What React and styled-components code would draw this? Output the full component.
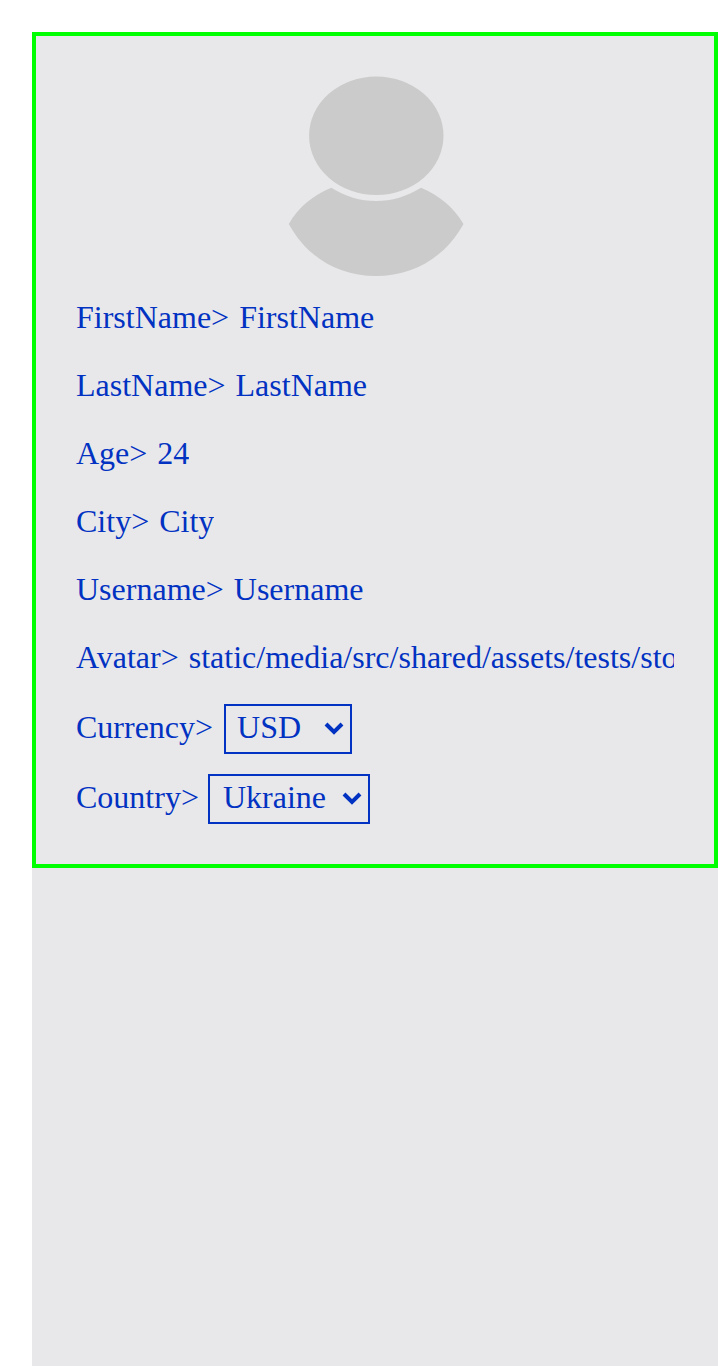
import React from "react";
import styled, { createGlobalStyle } from "styled-components";

const GlobalStyle = createGlobalStyle`
  body { margin: 0; background: #fff; overflow: hidden; }
`;

const Page = styled.main`
  box-sizing: border-box;
  margin: 32px 0 0 32px;
  height: 1334px;
  background: #e8e8ea;
  color: #0232c2;
  font: 32px/36px "Liberation Serif", "Times New Roman", serif;
`;

const Card = styled.section`
  box-sizing: border-box;
  height: 836px;
  padding: 40px;
  border: 4px solid #00ff00;
  display: flex;
  flex-direction: column;
`;

const Avatar = styled.svg`
  display: block;
  width: 200px;
  height: 200px;
  flex: none;
  align-self: center;
  margin: 0 0 23px 2px;
`;

const Field = styled.div`
  display: flex;
  flex: none;
  align-items: center;
  height: ${({ $select }) => ($select ? 50 : 36)}px;
  margin-bottom: ${({ $gap }) => $gap}px;
`;

const Label = styled.span`
  flex: none;
  margin-right: ${({ $gap = 10 }) => $gap}px;
  padding-bottom: ${({ $lift = 0 }) => $lift}px;
  white-space: nowrap;
`;

const Value = styled.span`
  flex: 0 1 auto;
  min-width: 0;
  overflow: hidden;
  white-space: nowrap;
`;

const SelectBox = styled.button`
  box-sizing: border-box;
  display: flex;
  align-items: center;
  justify-content: space-between;
  width: ${({ $width }) => $width}px;
  height: 50px;
  margin: 0;
  padding: 0 6px 4px ${({ $inset }) => $inset}px;
  border: 2px solid #0232c2;
  border-radius: 0;
  background: transparent;
  color: inherit;
  font: inherit;
`;

const Chevron = styled.svg`
  flex: none;
  width: 20px;
  height: 14px;
  margin-top: 1px;
`;

const fields = [
  ["FirstName", "FirstName", 32],
  ["LastName", "LastName", 32],
  ["Age", "24", 32],
  ["City", "City", 32],
  ["Username", "Username", 32],
  ["Avatar", "static/media/src/shared/assets/tests/storybook.jpg", 29],
];

function Select({ label, value, width, inset, gap, labelGap }) {
  return (
    <Field $select $gap={gap}>
      <Label $gap={labelGap} $lift={4}>{label}&gt;</Label>
      <SelectBox type="button" $width={width} $inset={inset}>
        {value}
        <Chevron viewBox="0 0 20 14" fill="none" stroke="currentColor" strokeWidth="4">
          <path d="M2 3L10 11L18 3" />
        </Chevron>
      </SelectBox>
    </Field>
  );
}

export default function App() {
  return (
    <>
      <GlobalStyle />
      <Page>
        <Card>
          <Avatar viewBox="0 0 200 200" fill="#cbcbcb">
            <ellipse cx="100.3" cy="59.7" rx="67.2" ry="59.3" />
            <path d="M55.3 111.8C83 129.5 117 129.5 145 111.8C163 119.5 178 131.5 187.5 147.9C169 181 138 200 100 200S31 181 12.8 147.9C22 131.5 37 119.5 55.3 111.8Z" />
          </Avatar>
          {fields.map(([label, value, gap]) => (
            <Field key={label} $gap={gap}>
              <Label>{label}&gt;</Label>
              <Value>{value}</Value>
            </Field>
          ))}
          <Select label="Currency" value="USD" width={128} inset={11} gap={20} labelGap={11} />
          <Select label="Country" value="Ukraine" width={162} inset={13} gap={0} labelGap={9} />
        </Card>
      </Page>
    </>
  );
}
